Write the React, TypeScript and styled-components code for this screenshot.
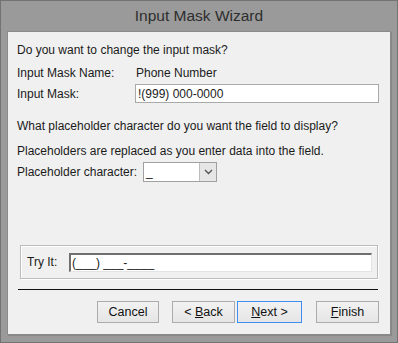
import * as React from 'react'
import styled, { createGlobalStyle } from 'styled-components'

const Global = createGlobalStyle`
  html, body {
    margin: 0;
    padding: 0;
    background: #9a9a9a;
  }
`

const Window = styled.div`
  box-sizing: border-box;
  width: 398px;
  height: 343px;
  background: #9a9a9a;
  border: 1px solid #737373;
  display: flex;
  flex-direction: column;
  font-family: 'Liberation Sans', Arial, sans-serif;
  font-size: 12px;
  color: #1b1b1b;
`

const TitleBar = styled.div`
  height: 30px;
  display: flex;
  align-items: center;
  justify-content: center;
  font-size: 15.5px;
  color: #2e2e2e;
`

const Panel = styled.div`
  box-sizing: border-box;
  flex: 1;
  min-height: 0;
  margin: 0 6px 7px 6px;
  background: #f0f0f0;
  border: 1px solid #8a8a8a;
  box-shadow: 1px 1px 0 #888;
  display: flex;
  flex-direction: column;
  padding: 11px 11px 0 9px;
  overflow: hidden;
`

const Text = styled.div<{ $top?: number }>`
  margin-top: ${p => p.$top ?? 0}px;
  line-height: 14px;
`

const Row = styled.div<{ $top?: number }>`
  display: flex;
  align-items: center;
  margin-top: ${p => p.$top ?? 0}px;
`

const Label = styled.div<{ $w: number }>`
  width: ${p => p.$w}px;
  flex-shrink: 0;
`

const TextBox = styled.div`
  box-sizing: border-box;
  flex: 1;
  height: 19px;
  background: #fff;
  border: 1px solid #a9a9a9;
  display: flex;
  align-items: center;
  padding-left: 2px;
`

const Combo = styled.div`
  box-sizing: border-box;
  width: 74px;
  height: 20px;
  background: #fff;
  border: 1px solid #a0a0a0;
  display: flex;
  align-items: stretch;
`

const ComboValue = styled.div`
  flex: 1;
  padding-left: 2px;
  display: flex;
  align-items: center;
`

const ComboButton = styled.div`
  width: 16px;
  background: #e6e6e6;
  border-left: 1px solid #bdbdbd;
  display: flex;
  align-items: center;
  justify-content: center;
`

const Group = styled.div`
  box-sizing: border-box;
  flex-shrink: 0;
  margin: 63px 1px 0 3px;
  height: 34px;
  border: 1px solid #bcbcbc;
  box-shadow: inset 1px 1px 0 #fff, 1px 1px 0 #fff;
  display: flex;
  align-items: center;
  padding: 0 5px 0 6px;
`

const TryBox = styled.div`
  box-sizing: border-box;
  flex: 1;
  height: 19px;
  background: #fff;
  border-style: solid;
  border-width: 2px 1px 1px 2px;
  border-color: #6f6f6f #e3e3e3 #e3e3e3 #6f6f6f;
  display: flex;
  align-items: center;
  padding-left: 1px;
`

const Separator = styled.div`
  flex-shrink: 0;
  height: 1px;
  background: #111;
  margin: 10px 1px 0 1px;
`

const Buttons = styled.div`
  display: flex;
  margin-top: 11px;
  padding-left: 80px;
`

const Button = styled.div<{ $w: number; $gap?: number; $default?: boolean }>`
  box-sizing: border-box;
  flex-shrink: 0;
  width: ${p => p.$w}px;
  height: 22px;
  margin-left: ${p => p.$gap ?? 0}px;
  background: linear-gradient(#f2f2f2, #e5e5e5);
  border: 1px solid ${p => (p.$default ? '#3c8ff0' : '#acacac')};
  display: flex;
  align-items: center;
  justify-content: center;
  font-size: 12.5px;
  color: #111;
`

const Key = styled.span`
  text-decoration: underline;
`

export default function App() {
  return (
    <Window>
      <Global />
      <TitleBar>Input Mask Wizard</TitleBar>
      <Panel>
        <Text>Do you want to change the input mask?</Text>
        <Row $top={9}>
          <Label $w={119}>Input Mask Name:</Label>
          <div>Phone Number</div>
        </Row>
        <Row $top={4}>
          <Label $w={118}>Input Mask:</Label>
          <TextBox>!(999) 000-0000</TextBox>
        </Row>
        <Text $top={16}>What placeholder character do you want the field to display?</Text>
        <Text $top={11}>Placeholders are replaced as you enter data into the field.</Text>
        <Row $top={4}>
          <Label $w={126}>Placeholder character:</Label>
          <Combo>
            <ComboValue>_</ComboValue>
            <ComboButton>
              <svg width="9" height="6" viewBox="0 0 9 6">
                <path d="M1 1 L4.5 4.5 L8 1" fill="none" stroke="#555" strokeWidth="1.4" />
              </svg>
            </ComboButton>
          </Combo>
        </Row>
        <Group>
          <Label $w={42}>Try It:</Label>
          <TryBox>(___) ___-____</TryBox>
        </Group>
        <Separator />
        <Buttons>
          <Button $w={62}>Cancel</Button>
          <Button $w={63} $gap={13}>
            &lt;&nbsp;<Key>B</Key>ack
          </Button>
          <Button $w={65} $gap={2} $default>
            <Key>N</Key>ext &gt;
          </Button>
          <Button $w={63} $gap={14}>
            <Key>F</Key>inish
          </Button>
        </Buttons>
      </Panel>
    </Window>
  )
}
